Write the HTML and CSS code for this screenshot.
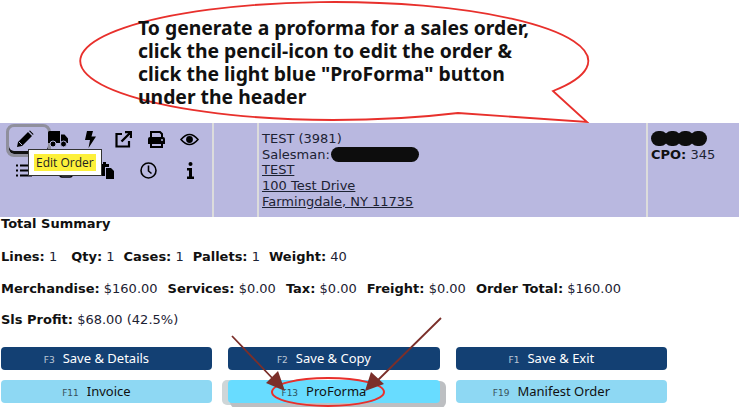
FILE: index.html
```html
<!DOCTYPE html>
<html lang="en">
<head>
  <meta charset="UTF-8" />
  <meta name="viewport" content="width=device-width, initial-scale=1.0" />
  <title>Sales Order ProForma</title>
  <link rel="stylesheet" href="styles.css">
</head>
<body>
  <div class="callout">
    <svg class="callout-shape" width="739" height="123" viewBox="0 0 739 123">
      <path d="M553 91 L587 122 L458 113 Q400 120 333 120 A254 59 0 1 1 553 91 Z" fill="#fff" stroke="#e8302c" stroke-width="1.800" />
    </svg>
    <p class="callout-text">To generate a proforma for a sales order,<br>click the pencil-icon to edit the order &amp;<br>click the light blue "ProForma" button<br>under the header</p>
  </div>

  <div class="order-header">
    <div class="cell cell-icons">
      <div class="icon-row icon-row-six">
        <span class="icon icon-focus">
          <svg width="18" height="18" viewBox="0 0 18 18"><path d="M1 17l1-5L12 2l4 4L6 16z M13 1l1-.5 3.500 3.500-.5 1z" fill="#000" /><path d="M3 12l3 3" stroke="#b9b8e0" stroke-width="1" /></svg>
        </span>
        <span class="icon">
          <svg width="20" height="16" viewBox="0 0 20 16"><path d="M0 1.500Q0 0 1.500 0H12V12H0z M13 3.500h3.500L20 7.500V12H13z" fill="#000" /><circle cx="5" cy="13" r="3" fill="#000" stroke="#b9b8e0" stroke-width="1" /><circle cx="15.500" cy="13" r="3" fill="#000" stroke="#b9b8e0" stroke-width="1" /></svg>
        </span>
        <span class="icon">
          <svg width="11" height="17" viewBox="0 0 11 17"><path d="M2 0h6L6.500 5.500H11L3.500 17l1.500-8H0z" fill="#000" /></svg>
        </span>
        <span class="icon">
          <svg width="17" height="17" viewBox="0 0 17 17"><path d="M7 3H1.500V15.500H14V10" fill="none" stroke="#000" stroke-width="2.200" /><path d="M10 1h6v6M16 1L6.500 10.500" fill="none" stroke="#000" stroke-width="2.400" /></svg>
        </span>
        <span class="icon">
          <svg width="17" height="17" viewBox="0 0 17 17"><path d="M3 7V1h9l2 2v4M3 12v4h11v-4" fill="none" stroke="#000" stroke-width="2" /><path d="M0 8Q0 6 2 6H15Q17 6 17 8V13H0z" fill="#000" /><circle cx="14" cy="9" r="1" fill="#b9b8e0" /></svg>
        </span>
        <span class="icon">
          <svg width="19" height="13" viewBox="0 0 19 13"><path d="M1 6.500Q9.500-3.500 18 6.500Q9.500 16.500 1 6.500z" fill="none" stroke="#000" stroke-width="1.600" /><circle cx="9.500" cy="6.500" r="3.400" fill="#000" /></svg>
        </span>
      </div>
      <div class="icon-row icon-row-five">
        <span class="icon">
          <svg width="16" height="13" viewBox="0 0 16 13"><path d="M0 1.500h2M0 6.500h2M0 11.500h2M4 1.500h12M4 6.500h12M4 11.500h12" stroke="#000" stroke-width="2" /></svg>
        </span>
        <span class="icon">
          <svg width="14" height="15" viewBox="0 0 14 15"><path d="M1 6v6q0 2 2 2h8q2 0 2-2V6" fill="none" stroke="#000" stroke-width="1.500" /></svg>
        </span>
        <span class="icon">
          <svg width="14" height="17" viewBox="0 0 14 17"><path d="M0 2h3V0h3v2h3v3H5v9H0z" fill="#000" /><path d="M6 6h5l3 3v8H6z" fill="#000" /></svg>
        </span>
        <span class="icon">
          <svg width="17" height="17" viewBox="0 0 17 17"><circle cx="8.500" cy="8.500" r="7.500" fill="none" stroke="#000" stroke-width="1.600" /><path d="M8.500 3.500V9l3 2.500" fill="none" stroke="#000" stroke-width="1.600" /></svg>
        </span>
        <span class="icon">
          <svg width="7" height="17" viewBox="0 0 7 17"><circle cx="3.500" cy="2" r="2" fill="#000" /><path d="M0 6h5V14.500H7V17H0V14.500H2V8.500H0z" fill="#000" /></svg>
        </span>
      </div>
      <div class="tooltip"><span class="tooltip-text">Edit Order</span></div>
    </div>
    <div class="cell cell-blank"></div>
    <div class="cell cell-address">
      <div>TEST (3981)</div>
      <div>Salesman:<span class="redact-pill"></span></div>
      <div><a href="#">TEST</a></div>
      <div><a href="#">100 Test Drive</a></div>
      <div><a href="#">Farmingdale, NY 11735</a></div>
    </div>
    <div class="cell cell-cpo">
      <div class="redact-blob"><i></i><i></i><i></i><i></i></div>
      <div><b>CPO:</b> 345</div>
    </div>
  </div>

  <div class="summary">
    <p class="summary-title"><b>Total Summary</b></p>
    <p class="stats stats-tight"><span class="stat-first"><b>Lines:</b> 1</span><span><b>Qty:</b> 1</span><span><b>Cases:</b> 1</span><span><b>Pallets:</b> 1</span><span><b>Weight:</b> 40</span></p>
    <p class="stats stats-money"><span><b>Merchandise:</b> $160.00</span><span><b>Services:</b> $0.00</span><span><b>Tax:</b> $0.00</span><span><b>Freight:</b> $0.00</span><span><b>Order Total:</b> $160.00</span></p>
    <p><b>Sls Profit:</b> $68.00 (42.5%)</p>
  </div>

  <div class="actions">
    <button class="btn btn-dark"><small>F3</small>Save &amp; Details</button>
    <button class="btn btn-dark"><small>F2</small>Save &amp; Copy</button>
    <button class="btn btn-dark"><small>F1</small>Save &amp; Exit</button>
    <button class="btn btn-light"><small>F11</small>Invoice</button>
    <button class="btn btn-light btn-active"><small>F13</small>ProForma</button>
    <button class="btn btn-light"><small>F19</small>Manifest Order</button>
  </div>

  <!-- hand drawn markup on top of the screenshot -->
  <svg class="markup" width="739" height="407" viewBox="0 0 739 407">
    <ellipse cx="328" cy="392" rx="56" ry="14" fill="none" stroke="#e8302c" stroke-width="2" />
    <path d="M232 336L276 382M441 318L374 384" stroke="#7b2f2a" stroke-width="1.800" fill="none" />
    <path d="M285 391L266 383L278 371z M365 391L371 372L384 384z" fill="#7b2f2a" />
  </svg>
</body>
</html>
```

FILE: styles.css
```css
* {
  box-sizing: border-box;
}
html, body {
  margin: 0;
  height: 407px;
  overflow: hidden;
}
body {
  position: relative;
  background: #fff;
  color: #111;
  font-family: "DejaVu Sans", Verdana, sans-serif;
  font-size: 13px;
}

/* speech bubble */
.callout {
  position: relative;
  height: 123px;
}
.callout-shape {
  position: absolute;
  top: 0;
  left: 0;
}
.callout-text {
  position: relative;
  margin: 0;
  padding: 16px 0 0 138px;
  color: #111;
  font-family: "Noto Sans", sans-serif;
  font-size: 19.350px;
  font-weight: 700;
  line-height: 23px;
}

/* order header */
.order-header {
  display: grid;
  grid-template-columns: 212px 43px 387px 1fr;
  gap: 2px;
  height: 94px;
  background: #dcdcdc;
}
.cell {
  background: #b9b8e0;
}
.cell-icons {
  position: relative;
  padding-top: 7px;
}
.icon-row {
  display: grid;
  align-items: center;
  justify-items: center;
  height: 18px;
}
.icon-row-six {
  grid-template-columns: repeat(6, 33px);
  padding-left: 8px;
}
.icon-row-five {
  grid-template-columns: repeat(5, 41.500px);
  margin-top: 13px;
  padding-left: 3.500px;
}
.icon {
  display: flex;
  align-items: center;
  justify-content: center;
  position: relative;
}
.icon-focus::before {
  content: "";
  position: absolute;
  top: -6px;
  left: -10px;
  width: 39px;
  height: 27px;
  border: 3px solid #8f8f9c;
  border-radius: 8px;
  box-shadow: inset 0 -3px 0 #111;
}
.tooltip {
  position: absolute;
  top: 26px;
  left: 28px;
  padding: 4px 5px;
  background: #fff;
  border: 1px solid #333;
  z-index: 2;
}
.tooltip-text {
  display: block;
  padding: 0 2px;
  background: #fdf03a;
  color: #222;
  font-family: "Open Sans", sans-serif;
  font-size: 12px;
  line-height: 17px;
  white-space: nowrap;
}
.cell-address {
  padding: 8px 0 0 3px;
  color: #1c2233;
  line-height: 15.700px;
}
.cell-address a {
  color: inherit;
}
.redact-pill {
  display: inline-block;
  width: 88px;
  height: 15px;
  margin-left: 1px;
  border-radius: 8px;
  background: #0d0d0d;
  vertical-align: -3px;
}
.cell-cpo {
  padding: 8px 0 0 3px;
  color: #1c2233;
}
.redact-blob {
  display: flex;
  height: 15px;
  margin-bottom: 1px;
}
.redact-blob i {
  width: 17px;
  height: 15px;
  margin-right: -4px;
  border-radius: 8px;
  background: #0d0d0d;
}
.cell-cpo b {
  color: #111;
}

/* totals */
.summary {
  padding-left: 1px;
  color: #1c2233;
}
.summary p {
  margin: 0 0 18px;
  line-height: 14px;
}
.summary b {
  color: #111;
}
.summary .summary-title {
  margin-bottom: 19px;
}
.summary .stats-money {
  margin-bottom: 17px;
}
.stats {
  display: flex;
  gap: 10px;
}
.stats-tight {
  gap: 9px;
}
.stat-first {
  margin-right: 5px;
}

/* buttons */
.actions {
  display: grid;
  grid-template-columns: repeat(3, 211.500px);
  gap: 10px 16px;
  padding: 2px 0 0 0.700px;
}
.btn {
  height: 23px;
  padding: 0 20px 1px 0;
  border: 0;
  border-radius: 4px;
  font-family: "Noto Sans", sans-serif;
  font-size: 13px;
}
.btn small {
  margin-right: 8px;
  font-family: "DejaVu Sans", sans-serif;
  font-size: 9px;
  opacity: 0.7;
}
.btn-dark {
  background: #134073;
  color: #fff;
}
.btn-light {
  background: #8ed8f3;
  color: #111;
}
.btn-active {
  background: #68dcff;
  box-shadow: 4px 3px 0 2px #bdbfc2, -5px 1px 0 1px #cfd6d8;
}

.markup {
  position: absolute;
  top: 0;
  left: 0;
  pointer-events: none;
}
```
